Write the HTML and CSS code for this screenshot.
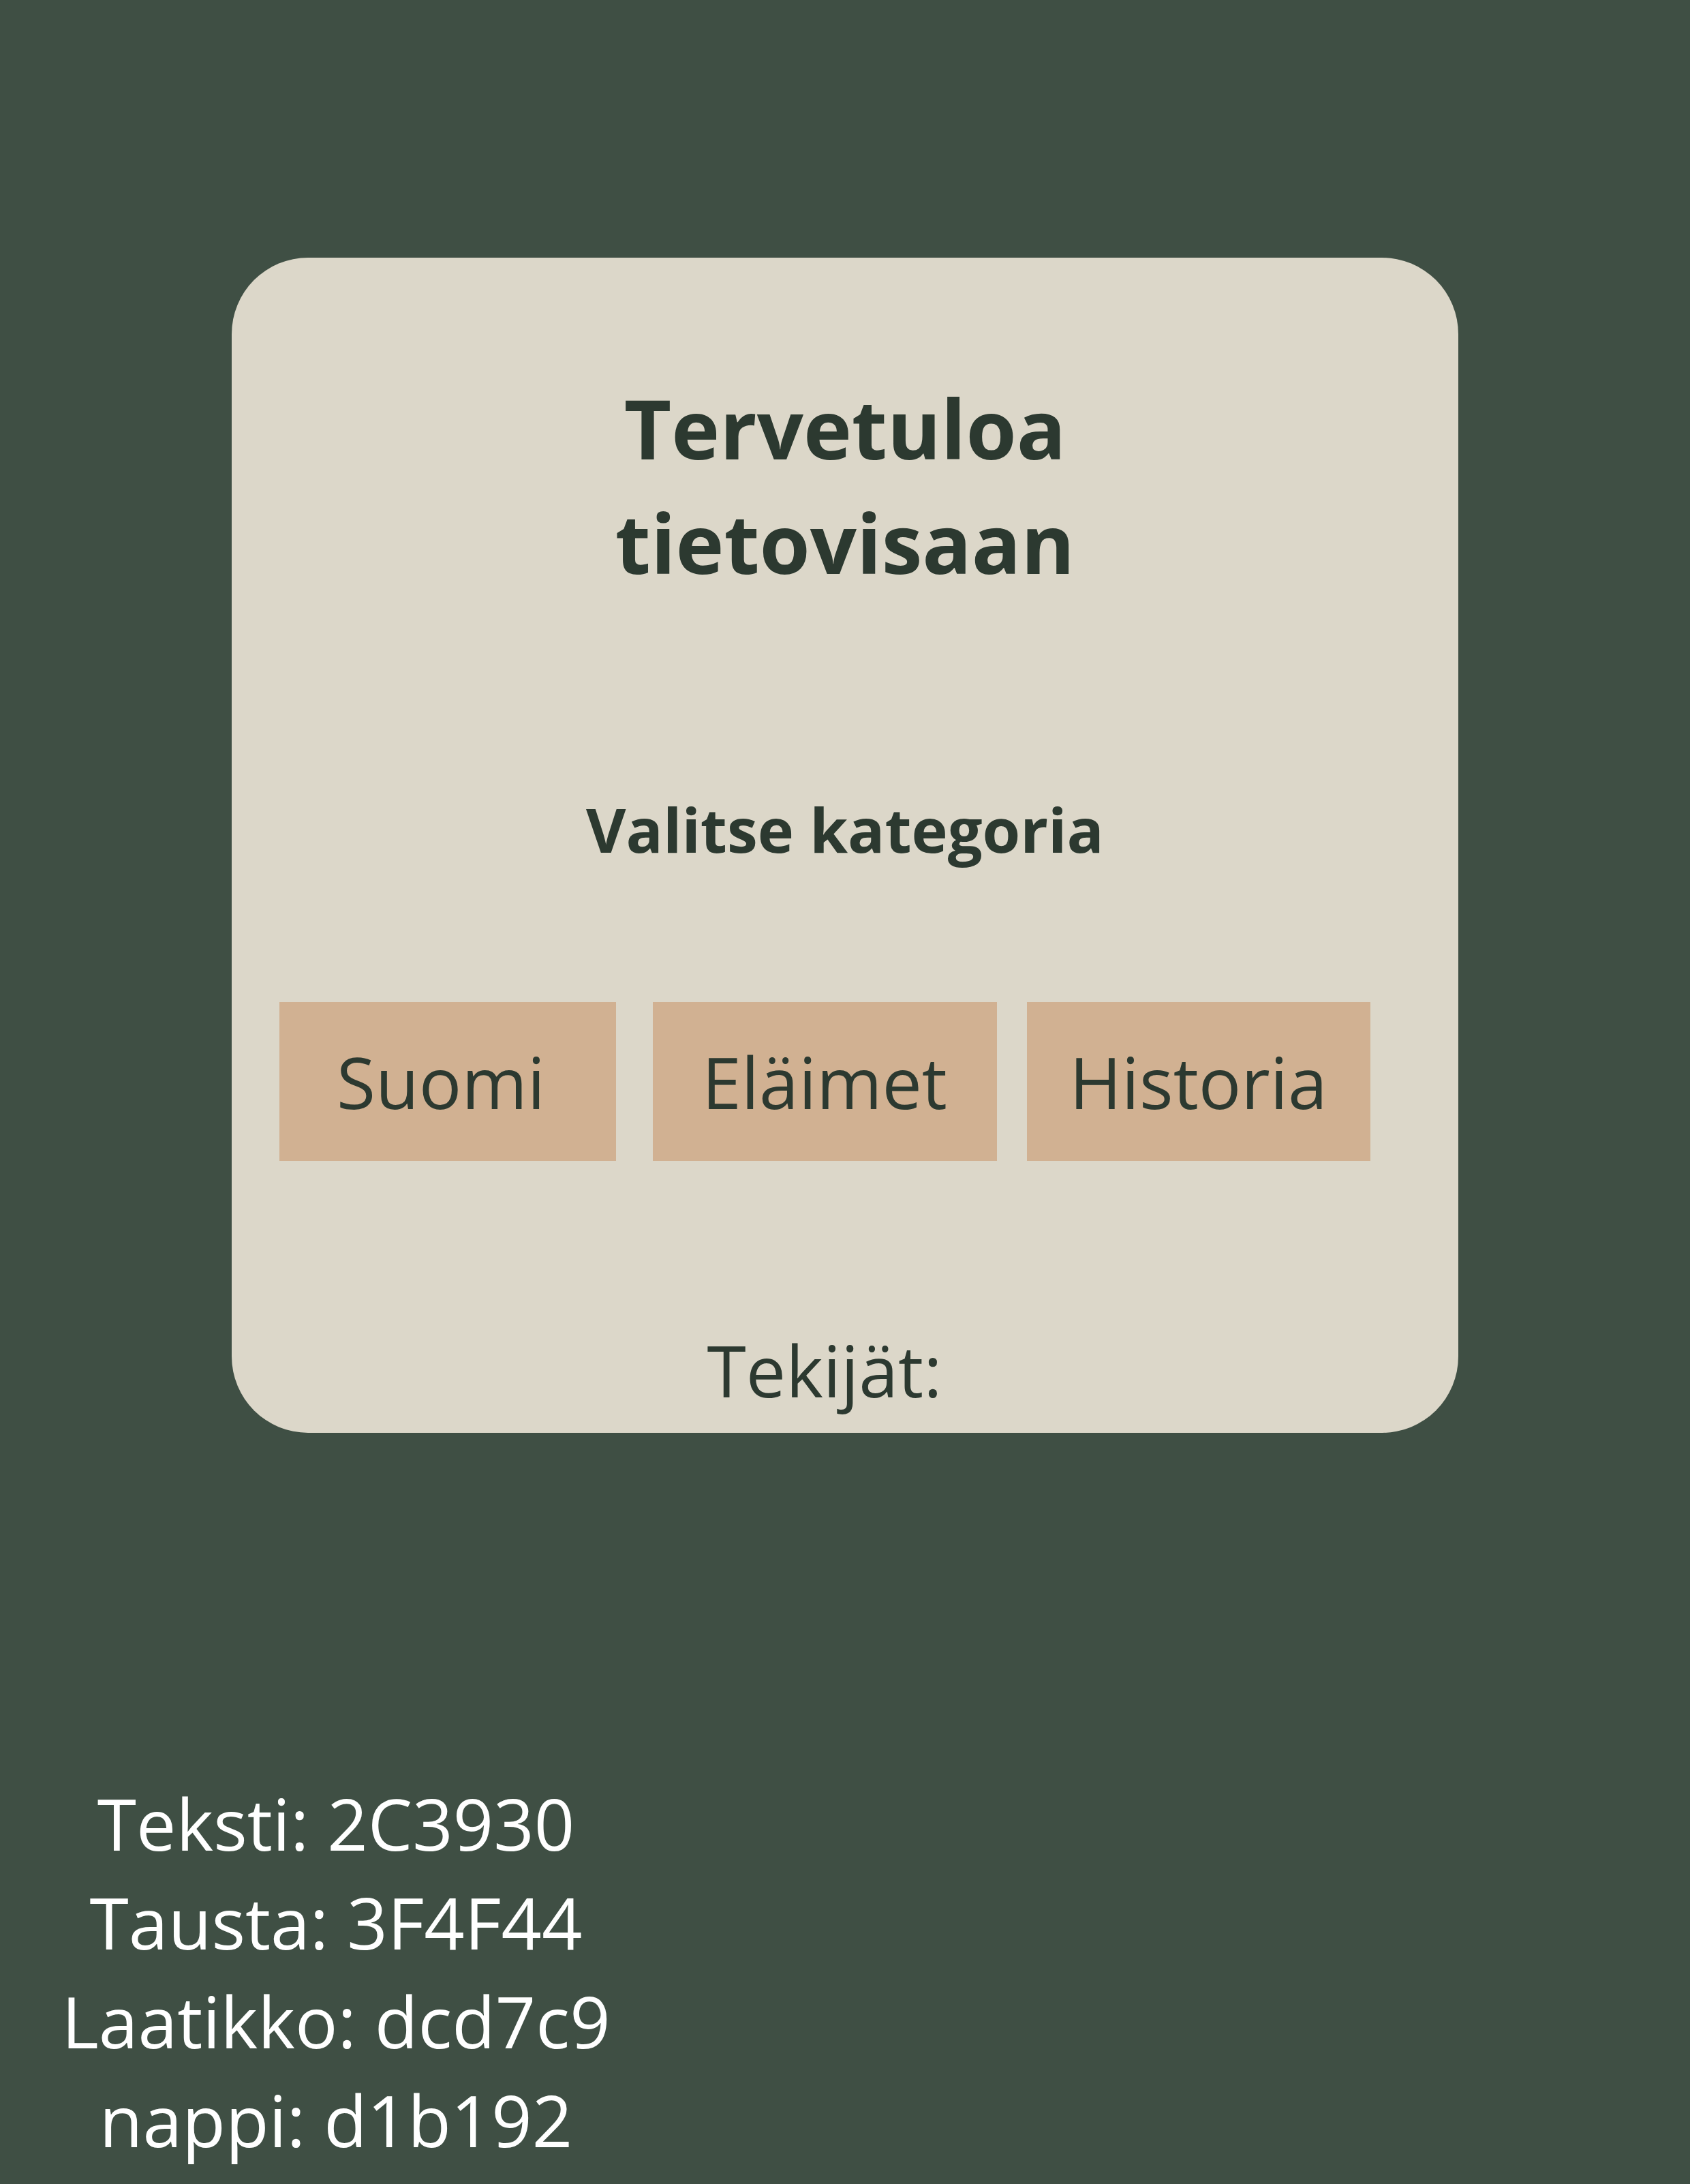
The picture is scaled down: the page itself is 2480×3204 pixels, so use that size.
FILE: index.html
```html
<!DOCTYPE html>
<html lang="fi">
<head>
<meta charset="utf-8">
<title>Tietovisa</title>
<link rel="stylesheet" href="styles.css">
</head>
<body>
<main class="page">
  <section class="card">
    <h1 class="title">Tervetuloa<br>tietovisaan</h1>
    <h2 class="subtitle">Valitse kategoria</h2>
    <div class="lower">
      <div class="btn-row">
        <button class="btn btn-suomi">Suomi</button>
        <button class="btn btn-elaimet">Eläimet</button>
        <button class="btn btn-historia">Historia</button>
      </div>
      <p class="authors">Tekijät:</p>
    </div>
  </section>
  <div class="legend">
    <p>Teksti: 2C3930</p>
    <p>Tausta: 3F4F44</p>
    <p>Laatikko: dcd7c9</p>
    <p>nappi: d1b192</p>
  </div>
</main>
</body>
</html>
```

FILE: styles.css
```css
html, body {
  margin: 0;
  padding: 0;
}
body {
  background: #3F4F44;
  font-family: "Open Sans", "Noto Sans", sans-serif;
  color: #2C3930;
  overflow: hidden;
}
.page {
  display: flex;
  flex-direction: column;
  padding-top: 378px;
}
.card {
  box-sizing: border-box;
  width: 1800px;
  height: 1724px;
  margin: 0 auto;
  background: #DCD7C9;
  border-radius: 112px;
  padding-top: 166px;
  display: flex;
  flex-direction: column;
}
.title {
  margin: 0;
  font-size: 120px;
  line-height: 168px;
  font-weight: 700;
  text-align: center;
}
.subtitle {
  margin: 272px 0 0;
  font-size: 90px;
  line-height: 128px;
  font-weight: 700;
  text-align: center;
}
.lower {
  padding-right: 60px;
  display: flex;
  flex-direction: column;
  align-items: center;
}
.btn-row {
  display: flex;
  margin-top: 190px;
}
.btn {
  box-sizing: border-box;
  height: 233px;
  border: 0;
  padding: 0;
  background: #D1B192;
  color: #2C3930;
  font-family: "Open Sans", "Noto Sans", sans-serif;
  font-size: 104px;
  line-height: 142px;
  font-weight: 400;
  display: flex;
  align-items: center;
  justify-content: center;
}
.btn-suomi { width: 494px; margin-right: 54px; padding-right: 19px; }
.btn-elaimet { width: 505px; margin-right: 44px; }
.btn-historia { width: 504px; }
.authors {
  margin: 236px 0 0;
  font-size: 104px;
  line-height: 142px;
}
.legend {
  width: 986px;
  margin-top: 500px;
  color: #FFFFFF;
  font-size: 104px;
  line-height: 145px;
  text-align: center;
}
.legend p {
  margin: 0;
}
```
